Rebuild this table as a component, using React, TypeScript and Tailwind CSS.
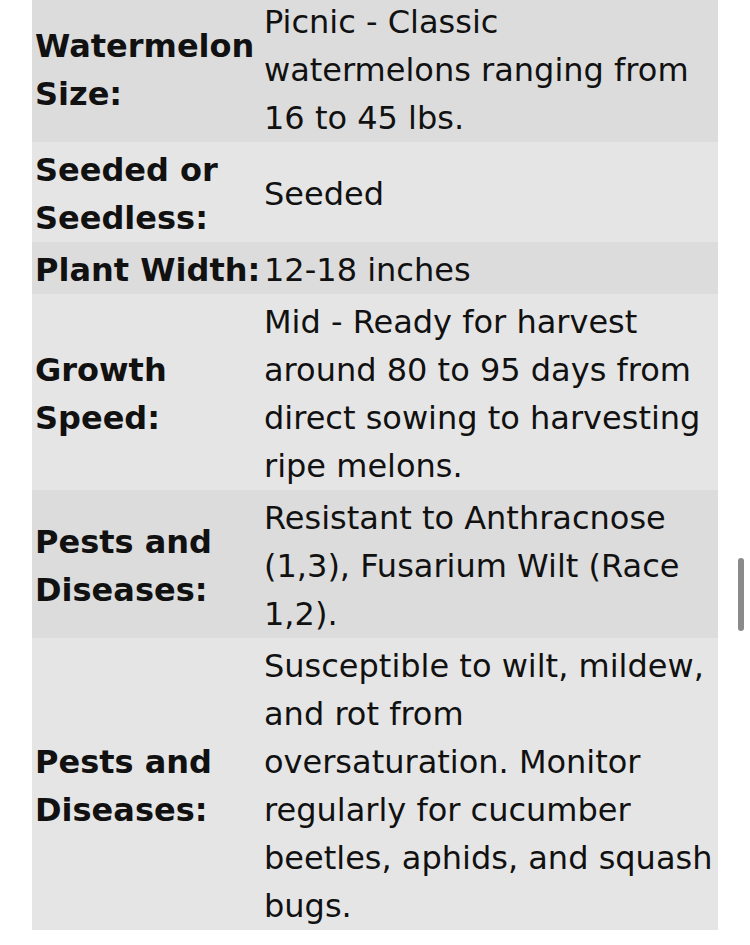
const rows: { label: string[]; value: string[]; dark: boolean }[] = [
  { label: ['Watermelon', 'Size:'], value: ['Picnic - Classic', 'watermelons ranging from', '16 to 45 lbs.'], dark: true },
  { label: ['Seeded or', 'Seedless:'], value: ['Seeded'], dark: false },
  { label: ['Plant Width:'], value: ['12-18 inches'], dark: true },
  {
    label: ['Growth', 'Speed:'],
    value: ['Mid - Ready for harvest', 'around 80 to 95 days from', 'direct sowing to harvesting', 'ripe melons.'],
    dark: false,
  },
  { label: ['Pests and', 'Diseases:'], value: ['Resistant to Anthracnose', '(1,3), Fusarium Wilt (Race', '1,2).'], dark: true },
  {
    label: ['Pests and', 'Diseases:'],
    value: [
      'Susceptible to wilt, mildew,',
      'and rot from',
      'oversaturation. Monitor',
      'regularly for cucumber',
      'beetles, aphids, and squash',
      'bugs.',
    ],
    dark: false,
  },
]

export default function App() {
  return (
    <div className="relative w-[750px] h-[945px] bg-white overflow-hidden" style={{ fontFamily: '"DejaVu Sans", Verdana, sans-serif' }}>
      <div className="ml-[32px] -mt-[6px] w-[686px] text-[32px] leading-[48px] text-[#111]">
        {rows.map((row, i) => (
          <div key={i} className={`flex ${row.dark ? 'bg-[#dcdcdc]' : 'bg-[#e5e5e5]'}`}>
            <div className="w-[229px] shrink-0 pt-[4px] pl-[3px] flex flex-col justify-center font-bold whitespace-nowrap">
              {row.label.map((l) => (
                <span key={l}>{l}</span>
              ))}
            </div>
            <div className="flex-1 pt-[4px] pl-[3px] flex flex-col justify-center whitespace-nowrap">
              {row.value.map((v) => (
                <span key={v}>{v}</span>
              ))}
            </div>
          </div>
        ))}
      </div>
      <div className="absolute left-[738px] top-[558px] w-[6px] h-[73px] rounded-full bg-[#8a8a8a]" />
    </div>
  )
}
